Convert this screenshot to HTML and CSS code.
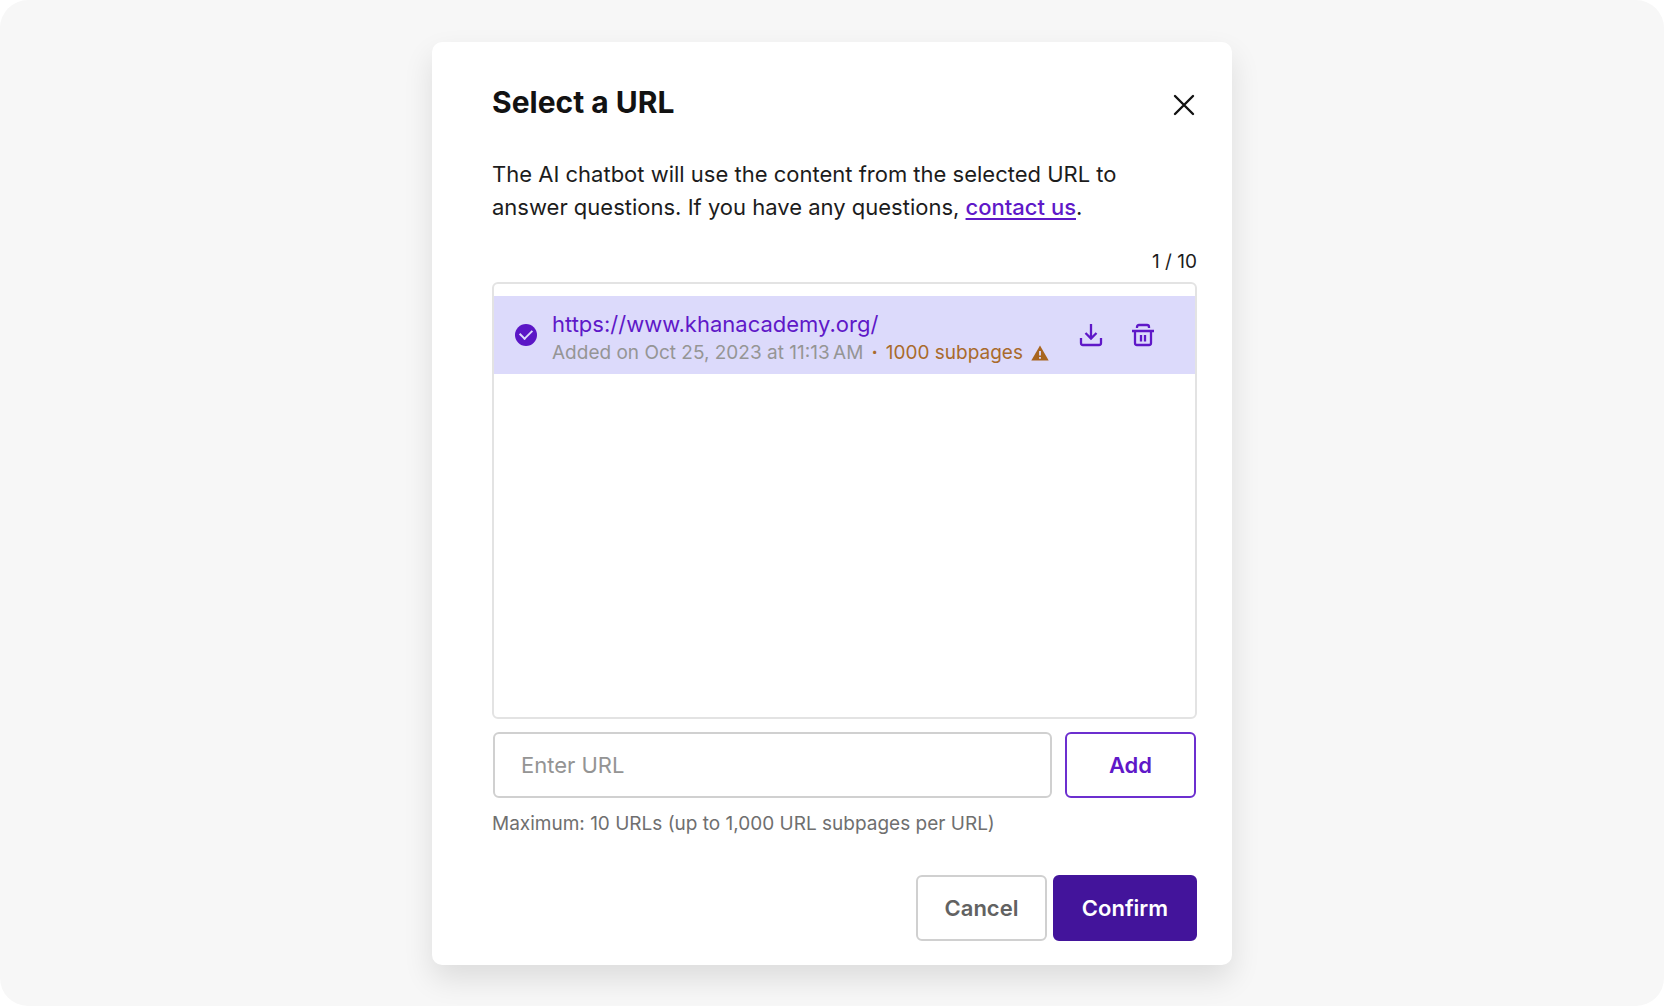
FILE: index.html
```html
<!DOCTYPE html>
<html lang="en">
<head>
  <meta charset="UTF-8">
  <meta name="viewport" content="width=device-width, initial-scale=1.0">
  <title>Select a URL</title>
  <link rel="stylesheet" href="styles.css">
</head>
<body>
  <main class="page">
    <form class="modal">
      <div class="modal-header">
        <h2>Select a URL</h2>
        <button type="button" class="icon-btn" aria-label="Close">
          <svg width="22" height="22" viewBox="0 0 22 22" fill="none" stroke="#121212" stroke-width="2.4" stroke-linecap="round">
            <path d="M2 2l18 18M20 2l-18 18"/>
          </svg>
        </button>
      </div>

      <p class="intro">The AI chatbot will use the content from the selected URL to answer questions. If you have any questions, <a href="#">contact us</a>.</p>

      <div class="counter">1 / 10</div>

      <ul class="url-list">
        <li class="url-item">
          <input type="radio" id="url1" name="url" checked>
          <div class="url-info">
            <label for="url1">https://www.khanacademy.org/</label>
            <div class="url-meta">
              <span>Added on Oct 25, 2023 at 11:13&#8239;AM</span>
              <b class="warning">·</b>
              <span class="warning">1000 subpages</span>
              <svg width="18" height="16" viewBox="0 0 18 16">
                <path d="M9 0.5L17.7 15.5H0.3z" fill="#a8651e"/>
                <path d="M9 6v4.6M9 12v1.8" stroke="#dcdafb" stroke-width="1.8"/>
              </svg>
            </div>
          </div>
          <div class="url-actions">
            <button type="button" class="icon-btn" aria-label="Download">
              <svg width="24" height="24" viewBox="0 0 24 24" fill="none" stroke="#5f18c8" stroke-width="2.3">
                <path d="M12 1v14.500M6.500 10l5.500 5.500 5.500-5.500"/>
                <path d="M2 15v5q0 2 2 2h16q2 0 2-2v-5"/>
              </svg>
            </button>
            <button type="button" class="icon-btn" aria-label="Delete">
              <svg width="24" height="24" viewBox="0 0 24 24" fill="none" stroke="#5f18c8" stroke-width="2.3">
                <path d="M1 8h22M6 5V4q0-2 2-2h8q2 0 2 2v1"/>
                <path d="M4 8v12q0 2 2 2h12q2 0 2-2V8M10 12v6.500M14 12v6.500"/>
              </svg>
            </button>
          </div>
        </li>
      </ul>

      <div class="add-row">
        <input type="text" id="newUrl" placeholder="Enter URL" aria-label="Enter URL">
        <button type="button" class="btn btn-add">Add</button>
      </div>
      <p class="note">Maximum: 10 URLs (up to 1,000 URL subpages per URL)</p>

      <div class="modal-footer">
        <button type="button" class="btn btn-cancel">Cancel</button>
        <button type="submit" class="btn btn-confirm">Confirm</button>
      </div>
    </form>
  </main>
</body>
</html>
```
FILE: styles.css
```css
* {
  box-sizing: border-box;
}
body {
  margin: 0;
  background-color: #fff;
  font-family: Inter, "Liberation Sans", sans-serif;
  font-size: 22px;
  color: #1c1c1c;
}
.page {
  display: flex;
  justify-content: center;
  align-items: center;
  min-height: 100vh;
  padding: 40px 20px;
  background-color: #f7f7f7;
  border-radius: 28px;
}
.modal {
  width: 100%;
  max-width: 800px;
  padding: 40px 35px 24px 60px;
  background-color: #fff;
  border-radius: 10px;
  box-shadow: 0 14px 30px rgba(0, 0, 0, 0.11);
}
.modal-header {
  display: flex;
  justify-content: space-between;
  align-items: flex-end;
}
h2 {
  margin: 0;
  font-size: 30px;
  line-height: 40px;
  color: #121212;
}
.icon-btn {
  display: flex;
  padding: 2px;
  background: none;
  border: none;
  cursor: pointer;
}
.modal-header .icon-btn {
  padding-bottom: 6px;
}
.intro {
  margin: 36px 0 24px;
  line-height: 33px;
}
.intro a {
  font-weight: 500;
  color: #5f18c8;
  text-underline-offset: 3px;
}
.counter {
  margin-bottom: 6px;
  font-size: 19px;
  line-height: 28px;
  text-align: right;
}
.url-list {
  height: 437px;
  margin: 0 0 13px;
  padding: 12px 0;
  list-style: none;
  border: 2px solid #e3e3e3;
  border-radius: 6px;
  overflow-y: auto;
}
.url-item {
  display: flex;
  align-items: center;
  height: 78px;
  padding: 0 38px 0 21px;
  background-color: #dcdafb;
}
.url-item input {
  display: grid;
  place-items: center;
  width: 22px;
  height: 22px;
  margin: 0 15px 0 0;
  appearance: none;
  background-color: #5b16c6;
  border-radius: 50%;
}
.url-item input::before {
  content: "";
  width: 10px;
  height: 6px;
  margin-bottom: 3px;
  border: solid #dcdafb;
  border-width: 0 0 2px 2px;
  transform: rotate(-45deg);
}
.url-info {
  flex: 1;
  padding-top: 7px;
}
.url-info label {
  display: block;
  line-height: 30px;
  color: #5f18c8;
}
.url-meta {
  display: flex;
  align-items: center;
  gap: 8px;
  font-size: 19px;
  line-height: 28px;
  color: #959595;
}
.warning {
  color: #a96a2c;
}
.url-actions {
  display: flex;
  gap: 24px;
}
.add-row {
  display: flex;
  gap: 13px;
  padding: 0 1px;
}
.add-row input {
  flex: 1;
  min-width: 0;
  height: 66px;
  padding: 0 26px;
  font: inherit;
  border: 2px solid #d0d0d0;
  border-radius: 6px;
}
.add-row input::placeholder {
  color: #949494;
}
.note {
  margin: 12px 0 37px;
  font-size: 19px;
  line-height: 28px;
  color: #6f6f6f;
}
.modal-footer {
  display: flex;
  justify-content: flex-end;
  gap: 6px;
}
.btn {
  width: 131px;
  height: 66px;
  font: inherit;
  font-weight: 600;
  background-color: #fff;
  border: 2px solid #d0d0d0;
  border-radius: 6px;
  cursor: pointer;
}
.btn-add {
  color: #5f18c8;
  border-color: #6c2fcf;
}
.btn-cancel {
  color: #626262;
}
.btn-confirm {
  width: 144px;
  color: #fff;
  background-color: #43149b;
  border-color: #43149b;
}
```
